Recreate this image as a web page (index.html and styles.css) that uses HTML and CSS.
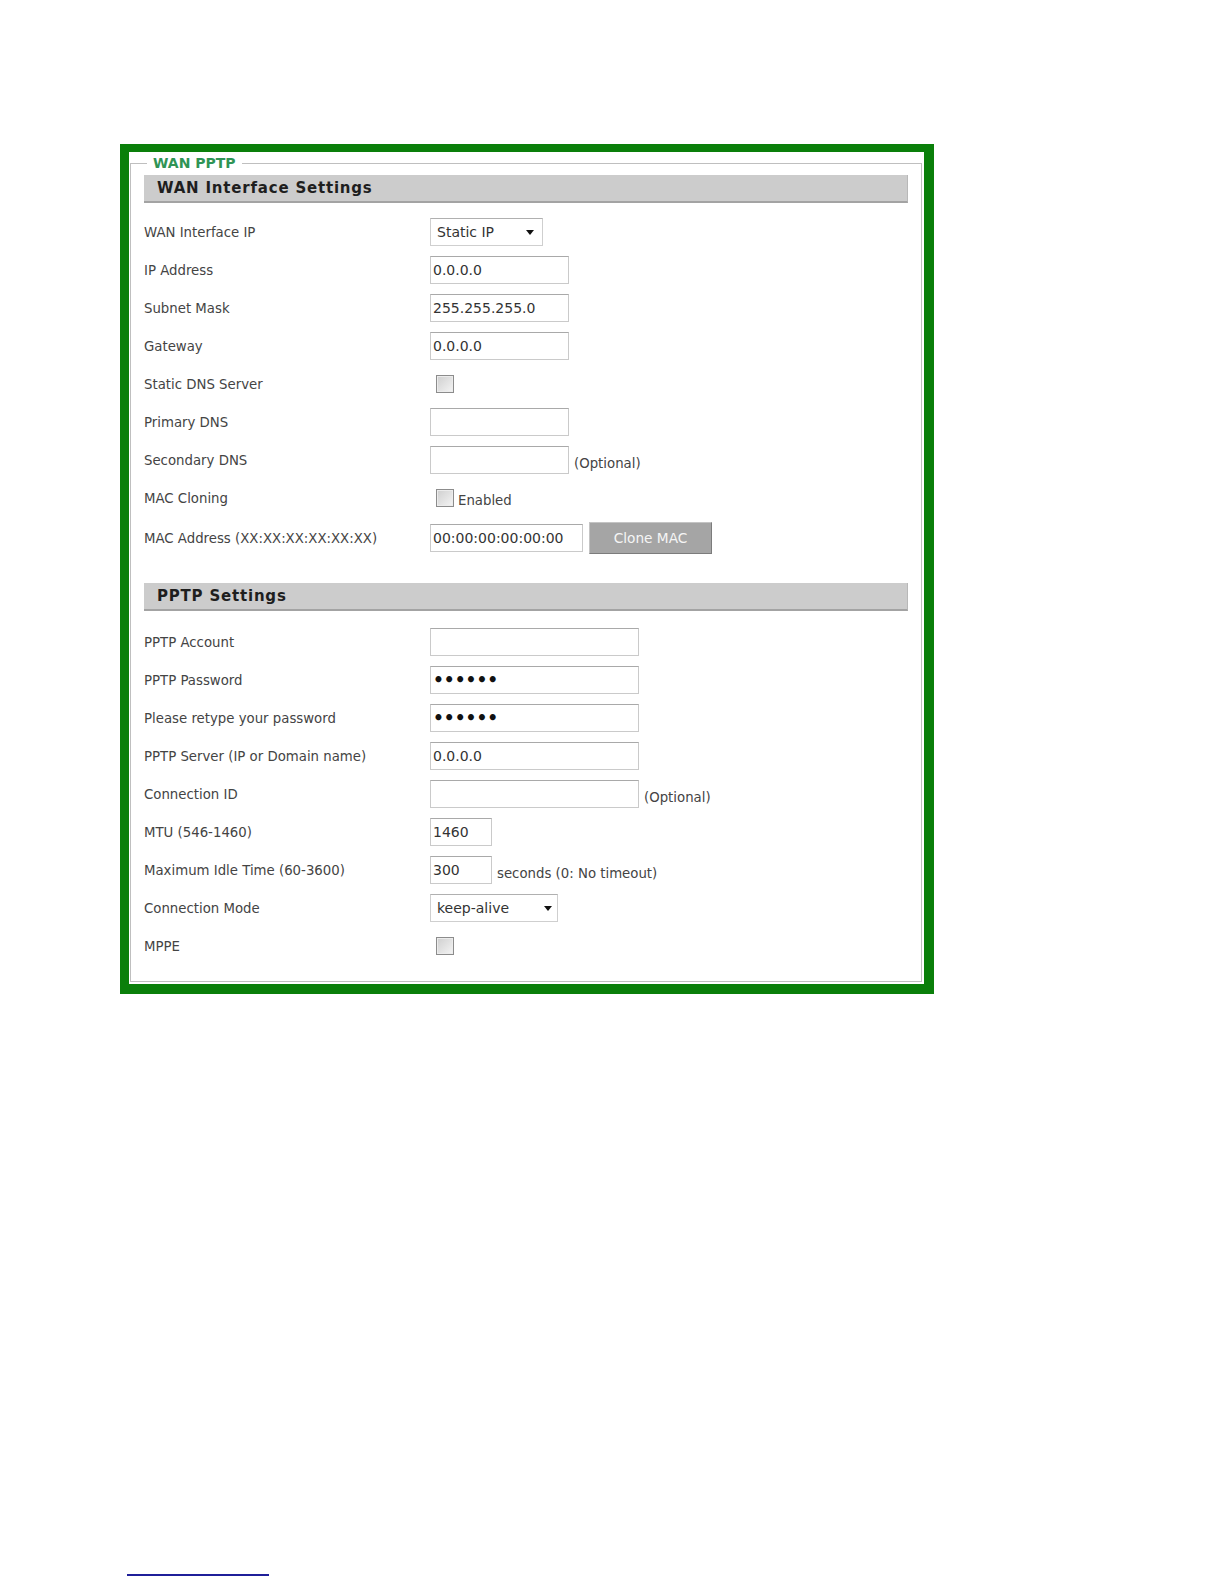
FILE: index.html
```html
<!DOCTYPE html>
<html lang="en">
<head>
  <meta charset="UTF-8">
  <title>WAN PPTP</title>
  <link rel="stylesheet" href="styles.css">
</head>
<body>
  <div class="page">
    <div class="frame">
      <fieldset class="panel">
        <legend>WAN PPTP</legend>

        <div class="section-title">WAN Interface Settings</div>
        <div class="rows">
          <div class="row">
            <label>WAN Interface IP</label>
            <div class="field">
              <div class="select-box">
                <select class="static-ip"><option>Static IP</option></select>
                <span class="arrow"></span>
              </div>
            </div>
          </div>
          <div class="row">
            <label>IP Address</label>
            <div class="field"><input class="text-input" type="text" value="0.0.0.0"></div>
          </div>
          <div class="row">
            <label>Subnet Mask</label>
            <div class="field"><input class="text-input" type="text" value="255.255.255.0"></div>
          </div>
          <div class="row">
            <label>Gateway</label>
            <div class="field"><input class="text-input" type="text" value="0.0.0.0"></div>
          </div>
          <div class="row">
            <label>Static DNS Server</label>
            <div class="field"><input class="check" type="checkbox"></div>
          </div>
          <div class="row">
            <label>Primary DNS</label>
            <div class="field"><input class="text-input" type="text" value=""></div>
          </div>
          <div class="row">
            <label>Secondary DNS</label>
            <div class="field"><input class="text-input" type="text" value=""><span class="note">(Optional)</span></div>
          </div>
          <div class="row">
            <label>MAC Cloning</label>
            <div class="field check-field"><input class="check" type="checkbox"><span class="note-inline">Enabled</span></div>
          </div>
          <div class="row mac-row">
            <label>MAC Address (XX:XX:XX:XX:XX:XX)</label>
            <div class="field"><input class="text-input mac" type="text" value="00:00:00:00:00:00"><button class="btn" type="button">Clone MAC</button></div>
          </div>
        </div>

        <div class="section-title second">PPTP Settings</div>
        <div class="rows rows-second">
          <div class="row">
            <label>PPTP Account</label>
            <div class="field"><input class="text-input wide" type="text" value=""></div>
          </div>
          <div class="row">
            <label>PPTP Password</label>
            <div class="field"><input class="text-input wide pass" type="password" value="secret"></div>
          </div>
          <div class="row">
            <label>Please retype your password</label>
            <div class="field"><input class="text-input wide pass" type="password" value="secret"></div>
          </div>
          <div class="row">
            <label>PPTP Server (IP or Domain name)</label>
            <div class="field"><input class="text-input wide" type="text" value="0.0.0.0"></div>
          </div>
          <div class="row">
            <label>Connection ID</label>
            <div class="field"><input class="text-input wide" type="text" value=""><span class="note">(Optional)</span></div>
          </div>
          <div class="row">
            <label>MTU (546-1460)</label>
            <div class="field"><input class="text-input short" type="text" value="1460"></div>
          </div>
          <div class="row">
            <label>Maximum Idle Time (60-3600)</label>
            <div class="field"><input class="text-input short" type="text" value="300"><span class="note">seconds (0: No timeout)</span></div>
          </div>
          <div class="row">
            <label>Connection Mode</label>
            <div class="field">
              <div class="select-box">
                <select class="mode"><option>keep-alive</option></select>
                <span class="arrow arrow-mode"></span>
              </div>
            </div>
          </div>
          <div class="row">
            <label>MPPE</label>
            <div class="field"><input class="check" type="checkbox"></div>
          </div>
        </div>
      </fieldset>
    </div>
    <div class="page-rule"></div>
  </div>
</body>
</html>
```

FILE: styles.css
```css
body {
  margin: 0;
  background-color: #fff;
  font-family: "DejaVu Sans", Verdana, sans-serif;
  color: #444;
}
.page {
  padding: 144px 0 0 120px;
}
.frame {
  width: 814px;
  box-sizing: border-box;
  border-style: solid;
  border-color: #0a7f0a;
  border-width: 8px 10px 10px 9px;
  padding: 3px 2px 2px 1px;
  background-color: #fff;
}
.panel {
  margin: 0;
  padding: 4px 13px 16px;
  border: 1px solid #bfbfbf;
  min-width: 0;
}
.panel legend {
  margin-left: 3px;
  padding: 0 6px;
  font-size: 14px;
  line-height: 16px;
  font-weight: bold;
  color: #2f9455;
}
.section-title {
  height: 28px;
  box-sizing: border-box;
  background-color: #cccccc;
  border-bottom: 2px solid #a3a3a3;
  border-right: 1px solid #b8b8b8;
  padding-left: 13px;
  font-size: 15px;
  line-height: 26px;
  font-weight: bold;
  letter-spacing: 0.8px;
  color: #1e1e1e;
}
.section-title.second {
  margin-top: 26px;
}
.rows {
  padding-top: 10px;
}
.rows-second {
  padding-top: 12px;
}
.row {
  display: grid;
  grid-template-columns: 286px auto;
  align-items: center;
  height: 38px;
  font-size: 13.3px;
}
.mac-row {
  margin-top: 2px;
}
.field {
  display: flex;
  align-items: center;
  gap: 5px;
}
.check-field {
  gap: 4px;
}
.note-inline {
  margin-top: 4px;
}
.text-input {
  box-sizing: border-box;
  width: 139px;
  height: 28px;
  margin: 0;
  padding: 0 2px;
  border: 1px solid #cacaca;
  border-top-color: #a9a9a9;
  border-radius: 0;
  background-color: #fff;
  font-family: "DejaVu Sans", Verdana, sans-serif;
  font-size: 14px;
  color: #333;
}
.text-input.wide {
  width: 209px;
}
.text-input.short {
  width: 62px;
}
.text-input.mac {
  width: 153px;
}
.text-input.pass {
  font-size: 17px;
  font-weight: bold;
  color: #111;
}
.note {
  margin-top: 7px;
}
.select-box {
  position: relative;
  display: inline-block;
}
.select-box select {
  -webkit-appearance: none;
  appearance: none;
  display: block;
  box-sizing: border-box;
  height: 28px;
  margin: 0;
  padding: 0 0 0 6px;
  border: 1px solid #cfcfcf;
  border-top-color: #b0b0b0;
  border-radius: 0;
  background-color: #fff;
  font-family: "DejaVu Sans", Verdana, sans-serif;
  font-size: 14px;
  color: #333;
}
select.static-ip {
  width: 113px;
}
select.mode {
  width: 128px;
}
.arrow {
  position: absolute;
  right: 9px;
  top: 12px;
  width: 0;
  height: 0;
  border-left: 4.5px solid transparent;
  border-right: 4.5px solid transparent;
  border-top: 5px solid #111;
  pointer-events: none;
}
.arrow-mode {
  right: 6px;
}
.check {
  -webkit-appearance: none;
  appearance: none;
  box-sizing: border-box;
  width: 18px;
  height: 18px;
  margin: 0 0 0 6px;
  border: 1px solid #8c8c8c;
  background: linear-gradient(135deg, #cfcfcf, #f4f4f4);
  box-shadow: inset 0 0 0 1px #ececec;
}
.btn {
  box-sizing: border-box;
  width: 123px;
  height: 32px;
  margin: 0 0 0 1px;
  border: 1px solid;
  border-color: #c4c4c4 #7c7c7c #7c7c7c #c4c4c4;
  background-color: #a5a5a5;
  font-family: "DejaVu Sans", Verdana, sans-serif;
  font-size: 13.7px;
  color: #f5f5f5;
}
.page-rule {
  width: 142px;
  height: 2px;
  margin: 580px 0 0 7px;
  background-color: #1f1f99;
}
```
